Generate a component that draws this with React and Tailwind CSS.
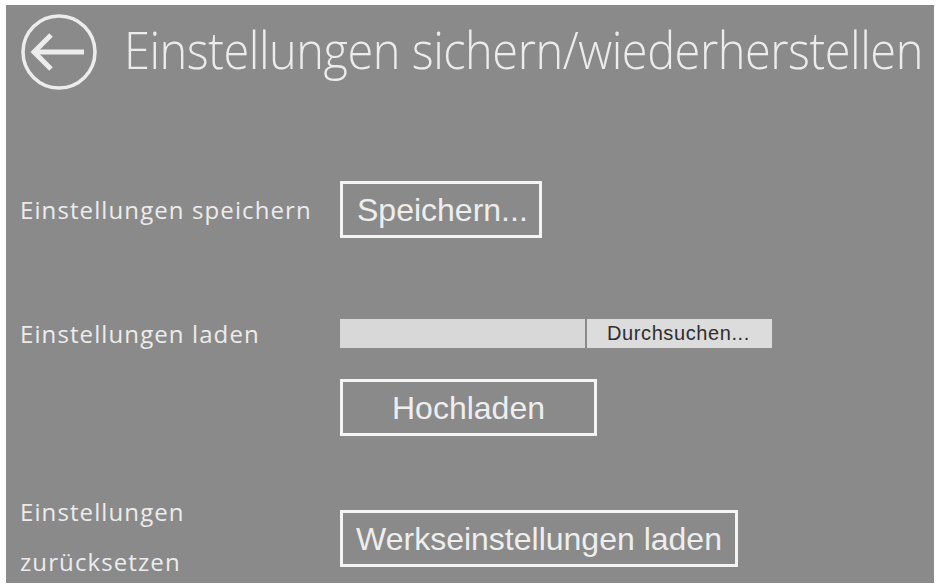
import React from 'react';

function BackIcon() {
  return (
    <svg width="78" height="78" viewBox="0 0 78 78" fill="none" stroke="#ececec" strokeWidth="3.5" className="shrink-0">
      <circle cx="39" cy="39" r="36" />
      <path d="M14 39 H64" strokeWidth="5" />
      <path d="M31 22 L14 39 L31 56" strokeWidth="5" strokeLinejoin="miter" />
    </svg>
  );
}

function OutlineButton({ children, className = '' }) {
  return (
    <button
      className={`h-[57px] shrink-0 border-[3px] border-[#f4f4f4] text-[#eeeeee] text-[32px] leading-none ${className}`}
      style={{ fontFamily: '"Liberation Sans", Arial, sans-serif' }}
    >
      {children}
    </button>
  );
}

export default function App() {
  const label = 'w-[320px] shrink-0 text-[24px] tracking-[1.1px] text-[#ececec] font-normal whitespace-nowrap';
  const labelFont = { fontFamily: '"Open Sans", "Noto Sans", sans-serif' };

  return (
    <div className="w-[943px] h-[587px] bg-white pt-[5px] pl-[6px]">
      <div className="w-[928px] h-[578px] bg-[#8a8a8a] overflow-hidden flex flex-col pl-[14px]">
        {/* header */}
        <div className="flex items-center pt-[9px] h-[85px]">
          <BackIcon />
          <h1
            className="ml-[26px] text-[51px] font-light text-[#ececec] leading-none tracking-[-0.5px] whitespace-nowrap origin-left scale-x-[0.92] -mt-[5px]"
            style={labelFont}
          >
            Einstellungen sichern/wiederherstellen
          </h1>
        </div>

        {/* save */}
        <div className="flex items-center h-[57px] mt-[91px]">
          <div className={`${label} leading-[30px]`} style={labelFont}>Einstellungen speichern</div>
          <OutlineButton className="w-[202px] text-left pl-[14px]">Speichern...</OutlineButton>
        </div>

        {/* load */}
        <div className="flex items-center h-[29px] mt-[81px]">
          <div className={`${label} leading-[29px]`} style={labelFont}>Einstellungen laden</div>
          <div className="flex h-[29px]">
            <div className="w-[245px] bg-[#d8d8d8]" />
            <div
              className="ml-[2px] w-[185px] bg-[#dcdcdc] text-[#2e2e2e] text-[20px] tracking-[0.6px] leading-[29px] pl-[20px] text-left"
              style={{ fontFamily: '"Liberation Sans", Arial, sans-serif' }}
            >
              Durchsuchen...
            </div>
          </div>
        </div>
        <div className="flex pl-[320px] mt-[31px]">
          <OutlineButton className="w-[257px]">Hochladen</OutlineButton>
        </div>

        {/* reset */}
        <div className="flex items-start h-[57px] mt-[74px]">
          <div className={`${label} leading-[50px] -mt-[23px]`} style={labelFont}>
            Einstellungen<br />zurücksetzen
          </div>
          <OutlineButton className="w-[398px]">Werkseinstellungen laden</OutlineButton>
        </div>
      </div>
    </div>
  );
}
